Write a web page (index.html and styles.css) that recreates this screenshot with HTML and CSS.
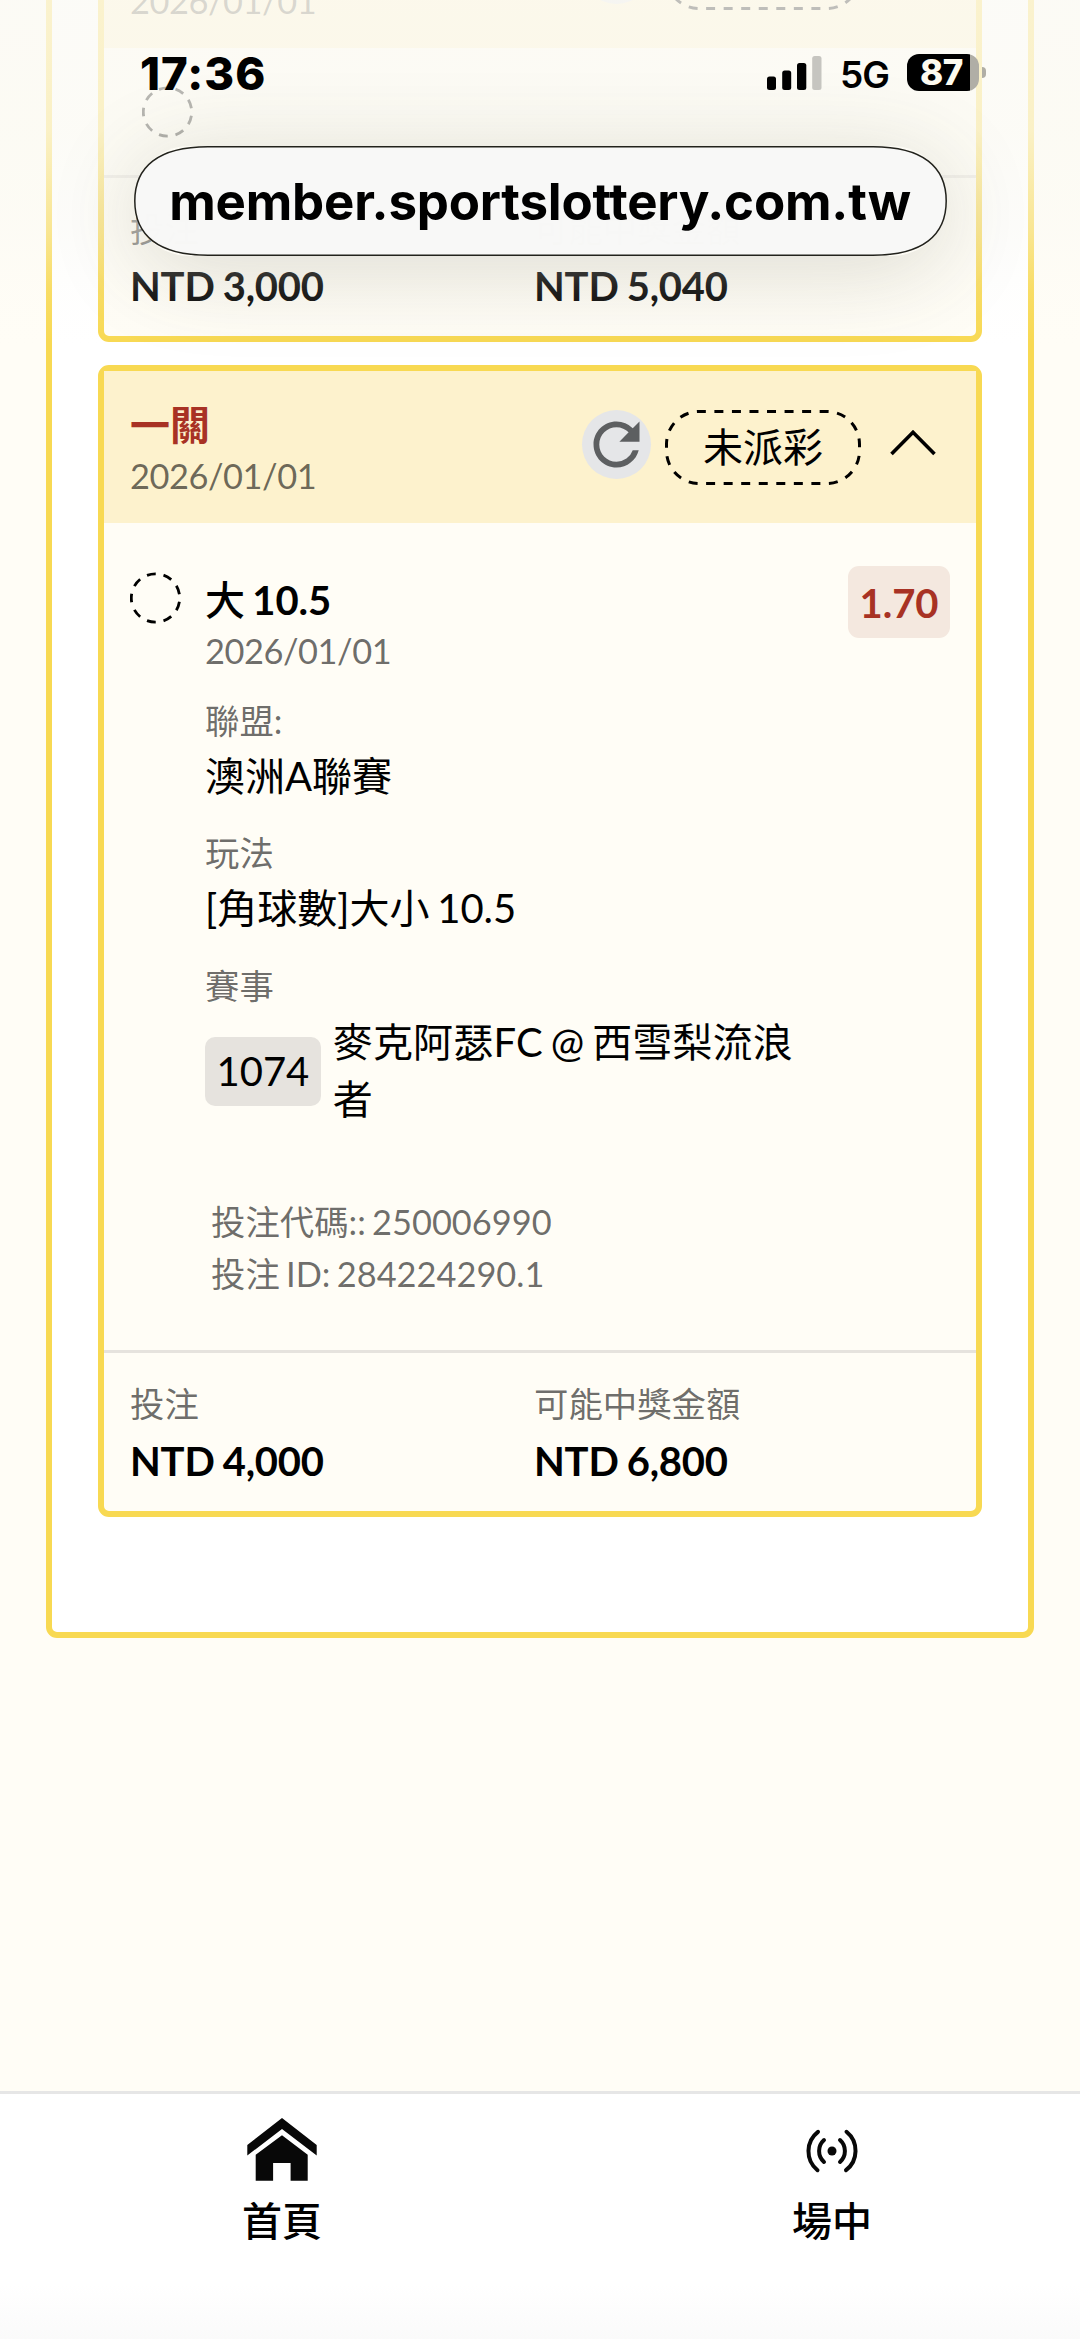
FILE: index.html
```
<!DOCTYPE html>
<html lang="zh-Hant">
<head>
<meta charset="utf-8">
<title>投注紀錄</title>
<link rel="stylesheet" href="styles.css">
</head>
<body>
<svg width="0" height="0" class="defs" aria-hidden="true">
  <symbol id="refresh" viewBox="0 0 24 24"><path d="M17.65 6.35A7.958 7.958 0 0 0 12 4c-4.42 0-7.99 3.58-7.99 8s3.57 8 7.99 8c3.73 0 6.84-2.55 7.73-6h-2.08A5.99 5.99 0 0 1 12 18c-3.31 0-6-2.69-6-6s2.69-6 6-6c1.66 0 3.14.69 4.22 1.78L13 11h7V4l-2.35 2.35z"/></symbol>
  <symbol id="outline" viewBox="0 0 196 75"><rect x="1.5" y="1.5" width="193" height="72" rx="32.6" pathLength="474" fill="none" stroke="#000" stroke-width="3" stroke-dasharray="9 8.556" stroke-dashoffset="-15.3"/></symbol>
  <symbol id="ring" viewBox="0 0 51 52"><circle cx="25.5" cy="26" r="24.2" pathLength="153" fill="none" stroke="#000" stroke-width="2.8" stroke-dasharray="9 8" stroke-dashoffset="-4"/></symbol>
  <symbol id="chevron" viewBox="0 0 46 28"><path d="M1.5 25 23 3.2 44.5 25" fill="none" stroke="#000" stroke-width="3.6"/></symbol>
</svg>
<div class="screen">
  <main class="panel">
    <article class="card">
      <header class="card-head">
        <div class="card-title"><h2>一關</h2><p class="muted day">2026/01/01</p></div>
        <span class="refresh"><svg><use href="#refresh"/></svg></span>
        <span class="status"><svg><use href="#outline"/></svg><b>未派彩</b></span>
        <svg class="chevron"><use href="#chevron"/></svg>
      </header>
      <div class="selection selection-short"><svg class="ring"><use href="#ring"/></svg></div>
      <footer class="totals">
        <div><p class="muted">投注</p><p class="amount">NTD 3,000</p></div>
        <div><p class="muted">可能中獎金額</p><p class="amount">NTD 5,040</p></div>
      </footer>
    </article>

    <article class="card">
      <header class="card-head">
        <div class="card-title"><h2>一關</h2><p class="muted day">2026/01/01</p></div>
        <span class="refresh"><svg><use href="#refresh"/></svg></span>
        <span class="status"><svg><use href="#outline"/></svg><b>未派彩</b></span>
        <svg class="chevron"><use href="#chevron"/></svg>
      </header>
      <div class="selection">
        <svg class="ring"><use href="#ring"/></svg>
        <div class="details">
          <h3><span>大</span> 10.5</h3>
          <p class="muted day date">2026/01/01</p>
          <dl>
            <dt>聯盟:</dt><dd>澳洲A聯賽</dd>
            <dt>玩法</dt><dd>[角球數]大小 10.5</dd>
            <dt>賽事</dt>
            <dd class="event"><span class="code">1074</span><span class="teams">麥克阿瑟FC @ 西雪梨流浪者</span></dd>
          </dl>
          <div class="ids muted"><p>投注代碼:: 250006990</p><p>投注 ID: 284224290.1</p></div>
        </div>
        <span class="odds">1.70</span>
      </div>
      <footer class="totals">
        <div><p class="muted">投注</p><p class="amount">NTD 4,000</p></div>
        <div><p class="muted">可能中獎金額</p><p class="amount">NTD 6,800</p></div>
      </footer>
    </article>
  </main>

  <nav class="tabs">
    <a class="tab">
      <svg width="70" height="63" viewBox="0 0 70 63"><path fill="#080808" d="M35 0 69.700 27V37.500L35 11 .3 37.500V27ZM35 17.200 60.700 36.800V62.700H43.600V45.100H26.100V62.700H8.700V36.800Z"/></svg>
      <span>首頁</span>
    </a>
    <a class="tab">
      <svg width="70" height="63" viewBox="-35 -33 70 63"><circle r="4.500" fill="#080808"/><path fill="none" stroke="#080808" stroke-width="4" stroke-linecap="round" d="M-8-11a14.800 14.800 0 0 0 0 22M8-11a14.800 14.800 0 0 1 0 22M-14-19.200a24.500 24.500 0 0 0-.5 38.400M14.500-19.200a24.500 24.500 0 0 1-.5 38.400"/></svg>
      <span>場中</span>
    </a>
  </nav>

  <div class="browser-top">
    <div class="statusbar">
      <time>17:36</time>
      <svg class="bars" width="55" height="34" viewBox="0 0 55 34"><rect y="20.500" width="9" height="13.500" rx="2.500"/><rect x="15.200" y="14.500" width="9" height="19.500" rx="2.500"/><rect x="30" y="7" width="9.300" height="27" rx="2.500"/><rect x="45.200" width="9.300" height="34" rx="2.500" fill="#c6c5c0"/></svg>
      <span class="net">5G</span>
      <span class="battery">87</span>
      <i class="nub"></i>
    </div>
    <div class="address">
      <svg width="813" height="110" viewBox="0 0 813 110"><path d="M74 .8H739C789 .8 812.200 21 812.200 55S789 109.200 739 109.200H74C24 109.200 .8 89 .8 55S24 .8 74 .8Z" fill="#f8f8f7" fill-opacity=".985" stroke="#22221c" stroke-width="1.500"/></svg>
      <span>member.sportslottery.com.tw</span>
    </div>
  </div>
</div>
</body>
</html>
```
FILE: styles.css
```
* { box-sizing: border-box; margin: 0; padding: 0; }
body {
  background: #fffdf6;
  color: #000;
  font-family: Lato, "Noto Sans CJK TC", sans-serif;
  font-size: 40px;
  word-spacing: -2.500px;
}
.defs { position: absolute; }
.screen {
  position: relative;
  display: flex;
  flex-direction: column;
  width: 1080px;
  height: 2339px;
  overflow: hidden;
}
.muted, dt { color: rgba(0, 0, 0, .59); font-size: 34.4px; }
.day { letter-spacing: -.450px; }

.panel {
  display: flex;
  flex: none;
  flex-direction: column;
  gap: 23px;
  width: 988px;
  height: 1788px;
  margin: -150px 46px 0;
  padding: 34px 46px 0;
  border: 6px solid #f8d952;
  border-radius: 11px;
  background: #fff;
}
.card {
  flex: none;
  width: 884px;
  border: 6px solid #f8d952;
  border-radius: 11px;
  background: #fffdf6;
}
.card-head {
  display: flex;
  align-items: flex-start;
  height: 152px;
  padding: 30px 40px 0 26px;
  background: #fdf2cd;
}
.card-title { flex: 1; }
.card-title h2 { color: #a83224; font-size: 40px; font-weight: 700; line-height: 49px; }
.card-title p { line-height: 51px; }
.refresh { width: 69px; height: 69px; margin: 9px 14px 0 0; border-radius: 50%; background: #e5e6e8; }
.refresh svg { display: block; width: 69px; height: 69px; fill: #5d5f61; }
.status { display: grid; width: 196px; height: 75px; margin-top: 9px; place-items: center; }
.status svg, .status b { grid-area: 1 / 1; }
.status svg { width: 196px; height: 75px; }
.status b { font-weight: 400; line-height: 75px; }
.chevron { width: 46px; height: 28px; margin: 28px 0 0 29px; }

.selection { display: flex; align-items: flex-start; height: 827px; padding: 43px 26px 0 26px; }
.selection-short { height: 127px; padding: 37px 25px 0 38px; }
.ring { flex: none; width: 51px; height: 52px; margin-top: 6px; }
.selection-short .ring { margin-top: 1px; }
.details { flex: 1; padding-left: 24px; }
.details h3 { margin-top: 8px; font-size: 40px; font-weight: 700; line-height: 52px; }
.details h3 span { font-weight: 500; }
.date { line-height: 50px; }
dl { padding-top: 20px; }
dt { line-height: 50px; }
dd { margin-bottom: 22.400px; line-height: 61px; }
dt + dd + dt { margin-top: -1px; }
.event { display: flex; align-items: center; gap: 12px; padding-top: 3px; line-height: 57.600px; }
.code { height: 69px; padding: 0 11.500px; border-radius: 10px; background: #e6e3de; line-height: 69px; }
.teams { width: 475px; letter-spacing: .15px; }
.ids { padding: 45px 0 0 6px; line-height: 52px; }
.odds {
  width: 102px;
  height: 72px;
  border-radius: 11px;
  background: #f4e8df;
  color: #a83224;
  font-weight: 700;
  line-height: 74px;
  text-align: center;
}
.totals {
  display: grid;
  grid-template-columns: 404px 1fr;
  height: 161px;
  padding: 25px 25px 0 26px;
  border-top: 3px solid #e6e3de;
}
.totals .muted { line-height: 51px; }
.amount { font-weight: 700; line-height: 64px; letter-spacing: -.2px; word-spacing: -1.500px; }

.tabs {
  display: grid;
  grid-template-columns: 550px 550px;
  height: 248px;
  margin-top: auto;
  padding: 24px 0 0 7px;
  border-top: 3px solid #e6e6e6;
  background: linear-gradient(#fff 78%, #fafafa);
}
.tab { display: flex; flex-direction: column; align-items: center; gap: 11px; font-weight: 500; }
.tab span { line-height: 58px; }

/* browser chrome floating over the page */
.browser-top {
  position: absolute;
  inset: 0 0 auto;
  height: 350px;
  padding-top: 54px;
  background: linear-gradient(rgba(251, 250, 245, .76) 0, rgba(251, 250, 243, .72) 130px, rgba(250, 249, 243, .4) 230px, rgba(250, 249, 243, .12) 290px, rgba(250, 249, 243, 0) 345px);
  font-family: Inter, sans-serif;
}
.statusbar { display: flex; height: 37px; padding-left: 140px; }
.statusbar time { width: 627px; font-size: 45.500px; font-weight: 800; line-height: 40px; letter-spacing: 1px; }
.bars { flex: none; margin: 1.500px 18px 0 0; }
.net { width: 67px; font-size: 37px; font-weight: 600; line-height: 42px; letter-spacing: -1px; }
.battery {
  width: 72px;
  border-radius: 12px;
  background: linear-gradient(90deg, #000 63px, #b0aea6 63px);
  color: #fdfbf0;
  font-size: 35px;
  font-weight: 800;
  line-height: 37px;
  padding-left: 13px;
  letter-spacing: -.5px;
}
.nub { width: 4px; height: 11px; margin: 13px 0 0 3px; border-radius: 0 4px 4px 0; background: #b0aea6; }
.address {
  display: grid;
  width: 813px;
  height: 110px;
  margin: 55px 0 0 133.500px;
  place-items: center;
  border-radius: 55px;
  box-shadow: 0 14px 90px rgba(70, 70, 50, .18);
}
.address svg, .address span { grid-area: 1 / 1; }
.address span { font-size: 51px; font-weight: 700; line-height: 109px; letter-spacing: -.2px; white-space: nowrap; }
```
